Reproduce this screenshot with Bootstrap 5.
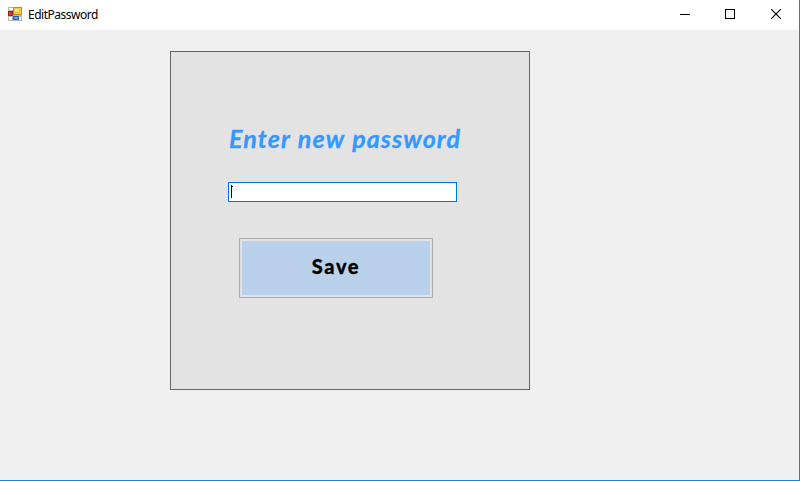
<!DOCTYPE html>
<html lang="en">
<head>
<meta charset="utf-8">
<meta name="viewport" content="width=device-width, initial-scale=1">
<title>EditPassword</title>
<link href="https://cdn.jsdelivr.net/npm/bootstrap@5.3.0/dist/css/bootstrap.min.css" rel="stylesheet">
<style>
  body { font-family: "Open Sans", sans-serif; background: #f0f0f0; overflow: hidden; }
  .app-window { height: 481px; border-right: 1px solid #1883d7; border-bottom: 1px solid #1883d7; }
  .title-bar { height: 30px; padding-left: 7px; }
  .title-text { font: 12px/30px "Noto Sans", sans-serif; color: #000; margin-left: 6px; letter-spacing: -.5px; height: 30px; }
  .caption-btn { width: 46px; height: 28px; padding: 0; border: 0; background: none; line-height: 0; }
  .caption-btn svg { display: block; margin: 0 auto; }
  .caption-btn:first-child { width: 44px; }
  .form-panel { width: 360px; height: 339px; margin: 21px 0 0 170px; background: #e3e3e3; border: 1px solid #646464; padding: 68px 0 0 57px; }
  .prompt { font: italic 700 25px/36px "Lato", sans-serif; color: #3399ff; letter-spacing: 1.1px; word-spacing: .8px; -webkit-text-stroke: .3px #3399ff; white-space: nowrap; height: 36px; margin: 0 0 26px 1px; }
  .password-box { width: 229px; height: 20px; min-height: 0; border: 1px solid #0078d7; padding: 0; background: #fff; }
  .caret { width: 2px; height: 14px; display: block; margin: 2px 0 0 2px; }
  .save-btn { width: 194px; height: 60px; margin: 36px 0 0 11px; padding: 0 0 4px; border: 1px solid #adadad; background: #b9d1ea; box-shadow: inset 0 0 0 2px #e1e1e1; font: 900 20px/24px "Lato", sans-serif; color: #000; letter-spacing: 1.6px; -webkit-text-stroke: .3px #000; }
  .save-btn:hover { border-color: #0078d7; background: #b9d1ea; color: #000; }
</style>
</head>
<body>
<div class="app-window d-flex flex-column">
  <header class="title-bar d-flex align-items-center bg-white">
    <svg width="15" height="15" viewBox="0 0 15 15" shape-rendering="crispEdges" class="mb-1" aria-hidden="true">
      <path d="M1 1h14v14H1z" fill="#b8b8b8"/>
      <path d="M2 2h4v2H2zM2 11h3v3H2zM12 11h2v3h-2z" fill="#fff"/>
      <path d="M1 5h5v5H1z" fill="#a51d16"/><path d="M2 6h3v3H2z" fill="#d53b32"/>
      <path d="M6 1h9v8H6z" fill="#c68b10"/><path d="M7 2h7v6H7z" fill="#f4c83d"/><path d="M8 3h4v3H8z" fill="#fbe087"/>
      <path d="M6 10h6v4H6z" fill="#2464c8"/><path d="M7 11h4v2H7z" fill="#5f9df0"/>
    </svg>
    <div class="title-text">EditPassword</div>
    <div class="ms-auto d-flex align-self-start">
      <button class="caption-btn" aria-label="Minimize"><svg width="10" height="10" shape-rendering="crispEdges"><path d="M0 5h10v1H0z"/></svg></button>
      <button class="caption-btn" aria-label="Maximize"><svg width="10" height="10" shape-rendering="crispEdges"><path d="M.5 .5h9v9h-9z" fill="none" stroke="#000"/></svg></button>
      <button class="caption-btn" aria-label="Close"><svg width="10" height="10"><path d="M0 0l10 10M10 0l-10 10" fill="none" stroke="#000" stroke-width="1.1"/></svg></button>
    </div>
  </header>
  <main>
    <form class="form-panel">
      <div class="prompt">Enter new password</div>
      <div class="password-box form-control rounded-0" role="textbox" tabindex="0" aria-label="New password">
        <svg class="caret" shape-rendering="crispEdges"><path d="M0 0h1v13H0zM1 1h1v1H1z"/></svg>
      </div>
      <button type="button" class="save-btn btn rounded-0 d-block">Save</button>
    </form>
  </main>
</div>
<script src="https://cdn.jsdelivr.net/npm/bootstrap@5.3.0/dist/js/bootstrap.bundle.min.js"></script>
</body>
</html>
